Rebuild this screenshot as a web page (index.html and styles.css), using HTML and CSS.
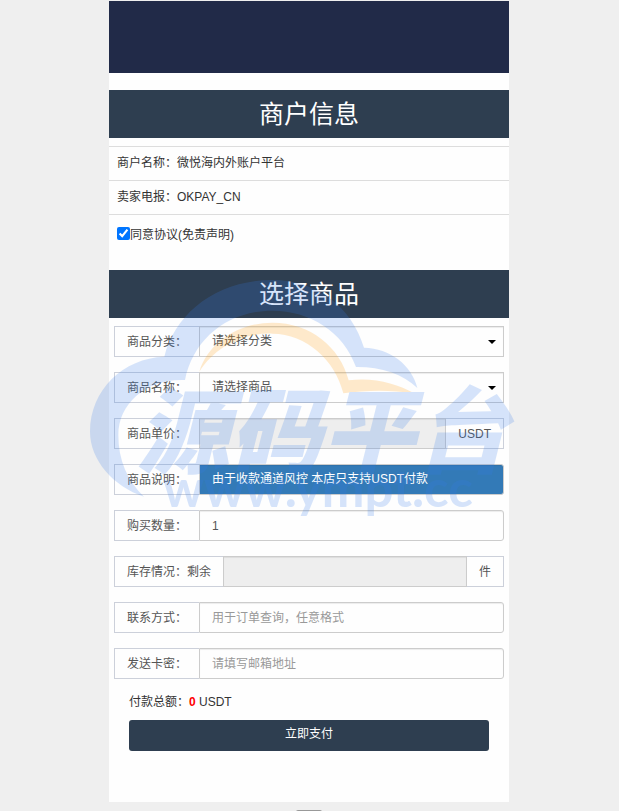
FILE: index.html
```
<!DOCTYPE html>
<html lang="zh-CN">
<head>
    <meta charset="UTF-8">
    <meta name="viewport" content="width=device-width, initial-scale=1.0">
    <title>商户信息</title>
    <link rel="stylesheet" href="styles.css">
</head>
<body>
    <main class="page">
        <header class="banner"></header>

        <h1 class="title">商户信息</h1>
        <ul class="info">
            <li>商户名称：微悦海内外账户平台</li>
            <li>卖家电报：OKPAY_CN</li>
            <li class="agree"><input type="checkbox" id="agree" checked><label for="agree">同意协议(免责声明)</label></li>
        </ul>

        <h2 class="title">选择商品</h2>
        <form class="order">
            <div class="group">
                <label class="addon" for="category">商品分类：</label>
                <div class="select">
                    <select class="control" id="category">
                        <option>请选择分类</option>
                    </select>
                </div>
            </div>
            <div class="group">
                <label class="addon" for="product">商品名称：</label>
                <div class="select">
                    <select class="control" id="product">
                        <option>请选择商品</option>
                    </select>
                </div>
            </div>
            <div class="group">
                <label class="addon" for="price">商品单价：</label>
                <input class="control" type="text" id="price" disabled>
                <span class="addon addon-right">USDT</span>
            </div>
            <div class="group">
                <span class="addon">商品说明：</span>
                <div class="control notice">由于收款通道风控 本店只支持USDT付款</div>
            </div>
            <div class="group">
                <label class="addon" for="amount">购买数量：</label>
                <input class="control rounded" type="text" id="amount" value="1">
            </div>
            <div class="group">
                <label class="addon" for="stock">库存情况：剩余</label>
                <input class="control" type="text" id="stock" disabled>
                <span class="addon addon-right">件</span>
            </div>
            <div class="group">
                <label class="addon" for="contact">联系方式：</label>
                <input class="control rounded" type="text" id="contact" placeholder="用于订单查询，任意格式">
            </div>
            <div class="group">
                <label class="addon" for="email">发送卡密：</label>
                <input class="control rounded" type="text" id="email" placeholder="请填写邮箱地址">
            </div>

            <div class="pay">
                <p class="total">付款总额：<b>0</b> USDT</p>
                <button type="submit" class="btn">立即支付</button>
            </div>
        </form>

        <!-- 水印 -->
        <svg class="watermark" viewBox="0 0 450 260" aria-hidden="true">
            <g transform="scale(.33333)">
                <path fill="#377deb" d="M192 680C100 650 30 570 30 485C30 360 130 264 253 260C285 130 410 30 577 30C710 30 815 110 852 233C930 235 996 285 1012 354C970 312 900 290 828 291C790 185 690 122 577 122C445 122 340 205 315 330C200 325 115 400 115 495C115 570 142 632 192 680Z"/>
                <path fill="#ff9b05" d="M358 305C385 215 480 158 577 158C690 158 780 230 806 331C880 321 950 340 1003 370C930 359 860 360 790 370C765 270 680 192 577 191C490 188 405 230 358 305Z"/>
            </g>
            <text class="mark-name" x="56" y="196">源码平台</text>
            <text class="mark-url" x="83" y="237">www.ympt.cc</text>
        </svg>
    </main>
    <div class="handle"></div>
</body>
</html>
```
FILE: styles.css
```
* {
    box-sizing: border-box;
}
body {
    margin: 0;
    padding: 1px 1px 0 0;
    background: #efefef;
    color: #333;
    font-family: "Liberation Sans", "Noto Sans CJK SC", sans-serif;
    font-size: 12px;
    line-height: 17px;
}
.page {
    position: relative;
    max-width: 400px;
    margin: 0 auto;
    padding-bottom: 51px;
    background: #fefefe;
}
.banner {
    height: 72px;
    margin-bottom: 17px;
    background: #212a48;
}
.title {
    margin: 0;
    background: #2e3e50;
    color: #fff;
    font-size: 25px;
    font-weight: 400;
    line-height: 48px;
    text-align: center;
}
.info {
    margin: 8px 0 0;
    padding: 0;
    list-style: none;
}
.info li {
    padding: 8px;
    border-top: 1px solid #ddd;
}
.info .agree {
    display: flex;
    align-items: flex-start;
    height: 56px;
    padding-top: 12px;
}
.agree input {
    width: 13px;
    height: 13px;
    margin: 0;
}
.order {
    padding: 8px 5px 0;
}
.group {
    display: flex;
    height: 31px;
    margin-bottom: 15px;
}
.addon {
    padding: 7px 12px 5px;
    border: 1px solid #ccd0da;
    border-right: 0;
    color: #555;
    white-space: nowrap;
}
.addon-right {
    border-right: 1px solid #ccd0da;
    border-left: 0;
}
.control {
    flex: 1;
    min-width: 0;
    height: 31px;
    padding: 6px 12px;
    border: 1px solid #ccc;
    border-radius: 0;
    background: #fefefe;
    box-shadow: inset 0 1px 1px rgba(0, 0, 0, 0.075);
    color: #555;
    font: inherit;
}
.control:disabled {
    background: #eee;
}
.control::placeholder {
    color: #999;
    opacity: 1;
}
.rounded,
.notice {
    border-radius: 0 3px 3px 0;
}
.notice {
    background: #337ab7;
    color: #fff;
}
.select {
    position: relative;
    flex: 1;
}
.select .control {
    display: block;
    width: 100%;
    appearance: none;
}
/* 下拉箭头 */
.select::after {
    content: "";
    position: absolute;
    top: 14px;
    right: 8px;
    border: 4px solid transparent;
    border-top-color: #000;
    border-bottom: 0;
    pointer-events: none;
}
.pay {
    padding: 0 15px;
}
.total {
    margin: 0 0 9px;
}
.total b {
    color: #f00;
}
.btn {
    display: block;
    width: 100%;
    height: 31px;
    padding: 0 0 2px;
    border: 0;
    border-radius: 3px;
    background: #2e3e50;
    color: #fff;
    font: inherit;
}
.watermark {
    position: absolute;
    top: 269px;
    left: -29px;
    width: 450px;
    height: 260px;
    opacity: 0.2;
    pointer-events: none;
}
.mark-name {
    fill: #377deb;
    font-family: "Noto Sans CJK SC", sans-serif;
    font-size: 93px;
    font-style: italic;
    font-weight: 900;
}
.mark-url {
    fill: #377deb;
    font-family: Lato, sans-serif;
    font-size: 51px;
    font-weight: 700;
}
.handle {
    width: 26px;
    height: 2px;
    margin: 8px auto 0;
    border-radius: 2px 2px 0 0;
    background: #999;
}
```
